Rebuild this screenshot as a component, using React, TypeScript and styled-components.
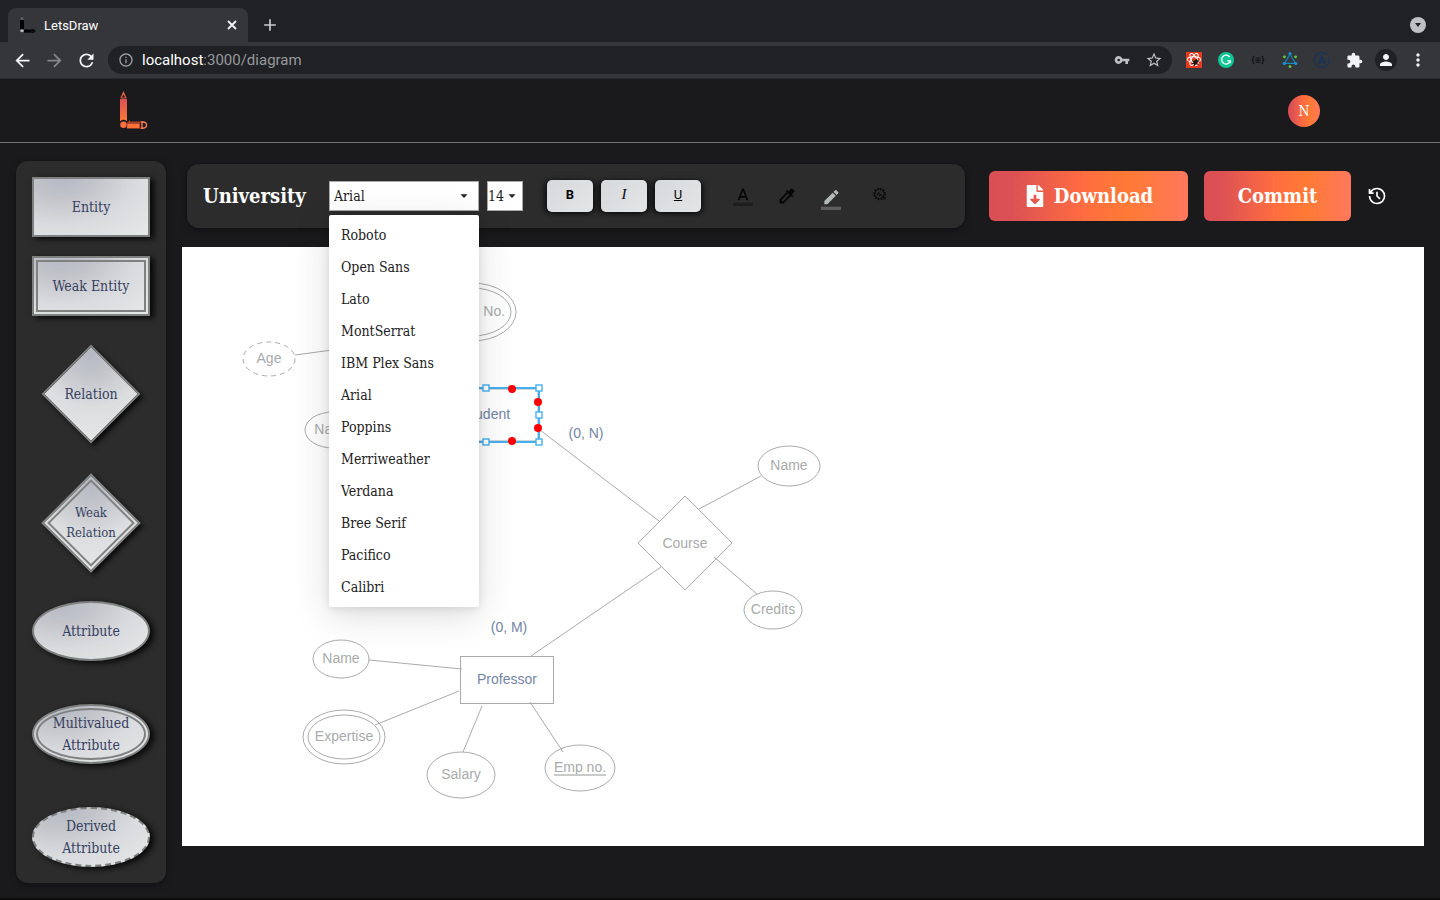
import React from "react";
import styled, { createGlobalStyle, css } from "styled-components";
import {
  MdAdd,
  MdArrowBack,
  MdArrowForward,
  MdColorize,
  MdExtension,
  MdInfoOutline,
  MdMoreVert,
  MdPerson,
  MdRefresh,
  MdStarBorder,
  MdVpnKey,
} from "react-icons/md";
import { FaFileDownload } from "react-icons/fa";

const slab = `"Roboto Slab", "DejaVu Serif Condensed", "DejaVu Serif", serif`;
const flame = "linear-gradient(90deg, #d94f55 0%, #dc5154 12%, #ff6d40 48%, #ff7a35 70%, #ff785c 100%)";

const GlobalStyle = createGlobalStyle`
  * { box-sizing: border-box; }
  body {
    margin: 0;
    background: #1a1a1c;
    font-family: ${slab};
    color: #fff;
  }
  button, select, input { font: inherit; color: inherit; }
  button { border: 0; padding: 0; background: none; cursor: pointer; }
  svg { display: block; flex: none; }
`;

const Page = styled.div`
  min-height: 100vh;
  display: flex;
  flex-direction: column;
  border-bottom: 2px solid #0c0c0d;
`;

/* Browser frame */

const TabStrip = styled.div`
  display: flex;
  align-items: flex-end;
  height: 42px;
  padding: 0 14px 0 8px;
  background: #202124;
  font-family: Roboto, sans-serif;
`;

const Tab = styled.div`
  display: flex;
  align-items: center;
  gap: 8px;
  width: 240px;
  height: 34px;
  padding: 0 11px 0 12px;
  border-radius: 8px 8px 0 0;
  background: #35363a;
  font-size: 13px;
`;

const TabTitle = styled.span`
  flex: 1;
`;

const NewTab = styled.button`
  display: flex;
  align-items: center;
  height: 34px;
  margin-left: 12px;
  color: #c8cbd0;
`;

const TabSearch = styled.button`
  display: flex;
  align-items: center;
  justify-content: center;
  width: 16px;
  height: 16px;
  margin: 0 0 9px auto;
  border-radius: 50%;
  background: #bdc1c6;
`;

const BrowserBar = styled.div`
  display: flex;
  align-items: center;
  height: 37px;
  padding: 0 14px 0 12px;
  border-bottom: 1px solid #2a2a2b;
  background: #35363a;
  font-family: Roboto, sans-serif;
`;

const NavButton = styled.button<{ $dim?: boolean }>`
  display: flex;
  justify-content: center;
  width: 20px;
  margin-right: 12px;
  color: ${(p) => (p.$dim ? "#86878a" : "#f4f5f6")};
`;

const Address = styled.div`
  display: flex;
  flex: 1;
  align-items: center;
  gap: 8px;
  height: 28px;
  padding: 0 9px 0 10px;
  border-radius: 14px;
  background: #202124;
  color: #bdc1c6;
  font-size: 15px;
`;

const Url = styled.span`
  flex: 1;
  color: #96999d;
  b {
    color: #fff;
    font-weight: 400;
  }
`;

const AddressIcon = styled.button`
  margin-left: 7px;
`;

const Extensions = styled.div`
  display: flex;
  align-items: center;
  gap: 16px;
  margin-left: 14px;
`;

const Extension = styled.button`
  display: flex;
  align-items: center;
  justify-content: center;
  width: 16px;
  height: 16px;
  color: #f1f3f4;
`;

/* Application header */

const Header = styled.header`
  display: flex;
  align-items: center;
  justify-content: space-between;
  height: 64px;
  padding: 0 120px;
  border-bottom: 1px solid #767676;
`;

const HomeLink = styled.a`
  display: block;
`;

const Avatar = styled.button`
  width: 32px;
  height: 32px;
  border-radius: 50%;
  background: ${flame};
  color: #fff;
  font-size: 14px;
  line-height: 32px;
`;

const Workspace = styled.main`
  display: flex;
  flex: 1;
  align-items: flex-start;
  gap: 16px;
  padding: 18px 16px 15px;
`;

/* Shape palette */

const Palette = styled.aside`
  display: flex;
  flex: none;
  flex-direction: column;
  gap: 29px;
  width: 150px;
  padding: 16px;
  border-radius: 12px;
  background: #2c2c2c;
  box-shadow: 0 2px 6px rgba(0, 0, 0, 0.4);
`;

const ShapeGroup = styled.div<{ $gap: number }>`
  display: flex;
  flex-direction: column;
  align-items: center;
  gap: ${(p) => p.$gap}px;
`;

type Outline = "single" | "double" | "dashed";

const outline = {
  single: "2px solid #7f8080",
  double: "6px double #7f8080",
  dashed: "2px dashed #7f8080",
};

const shapeSkin = css<{ $outline: Outline }>`
  border: ${(p) => outline[p.$outline]};
  background: radial-gradient(ellipse 80% 100% at 25% 0%, #b5b9c3 0%, #c2c4ca 35%, #dadbde 80%, #e5e6e6 125%) border-box #e5e6e6;
`;

const ShapeButton = styled.button<{ $outline: Outline; $round?: boolean }>`
  ${shapeSkin}
  display: flex;
  align-items: center;
  justify-content: center;
  width: 118px;
  height: 60px;
  border-radius: ${(p) => (p.$round ? "50%" : "0")};
  box-shadow: 4px 2px 6px rgba(0, 0, 0, 0.85);
  color: #36405f;
  font-size: 14px;
  line-height: 22px;
`;

const DiamondButton = styled.button`
  display: grid;
  place-items: center;
  width: 98px;
  height: 98px;
  color: #36405f;
  line-height: 20px;
`;

const DiamondShape = styled.span<{ $outline: Outline }>`
  ${shapeSkin}
  grid-area: 1 / 1;
  width: 70px;
  height: 70px;
  background: radial-gradient(circle at 10% 10%, #b5b9c3 0%, #c3c5cb 25%, #dcdddf 60%, #e6e7e7 100%) border-box;
  box-shadow: 4px 0 5px rgba(0, 0, 0, 0.8);
  transform: rotate(45deg);
`;

const DiamondLabel = styled.span<{ $small?: boolean }>`
  grid-area: 1 / 1;
  z-index: 1;
  font-size: ${(p) => (p.$small ? 13 : 14)}px;
`;

/* Editor */

const Editor = styled.section`
  display: flex;
  flex: 1;
  flex-direction: column;
  gap: 19px;
  min-width: 0;
`;

const TopRow = styled.div`
  display: flex;
  align-items: center;
  padding: 3px 37px 0 5px;
`;

const Toolbar = styled.div`
  display: flex;
  flex: 1;
  align-items: center;
  height: 64px;
  padding: 0 16px;
  border-radius: 12px;
  background: #2c2c2c;
  box-shadow: 0 2px 6px rgba(0, 0, 0, 0.4);
`;

const Title = styled.h1`
  width: 126px;
  margin: 0;
  font-size: 20px;
  font-weight: 700;
`;

const Field = styled.div<{ $width: number; $caret: number }>`
  position: relative;
  display: grid;
  align-items: center;
  width: ${(p) => p.$width}px;
  margin-right: 8px;
  color: #222;
  svg {
    grid-area: 1 / 1;
    justify-self: end;
    margin-right: ${(p) => p.$caret}px;
    pointer-events: none;
  }
`;

const Select = styled.select<{ $inset: number }>`
  appearance: none;
  grid-area: 1 / 1;
  width: 100%;
  height: 30px;
  padding: 0 0 0 ${(p) => p.$inset}px;
  border: 1px solid #a9a9a9;
  border-radius: 0;
  background: #fff;
  color: #222;
  font-size: 14px;
`;

const Menu = styled.ul`
  position: absolute;
  z-index: 5;
  top: 34px;
  left: 0;
  width: 150px;
  margin: 0;
  padding: 4px 0;
  border-radius: 2px;
  background: #fff;
  box-shadow: 0 2px 8px rgba(0, 0, 0, 0.1), 0 8px 38px rgba(0, 0, 0, 0.14);
  list-style: none;
`;

const MenuItem = styled.li`
  height: 32px;
  padding: 0 12px;
  color: #222;
  font-size: 14px;
  line-height: 32px;
  white-space: nowrap;
`;

const StyleButtons = styled.div`
  display: flex;
  gap: 8px;
  margin: 0 32px 0 16px;
`;

const StyleButton = styled.button<{ $kind: "bold" | "italic" | "underline" }>`
  width: 46px;
  height: 32px;
  padding-bottom: 4px;
  border-radius: 5px;
  background: linear-gradient(135deg, #d7d8dc, #e4e5e6);
  box-shadow: -3px 1px 5px rgba(0, 0, 0, 0.6), 3px 1px 5px rgba(0, 0, 0, 0.5);
  color: #050505;
  font-family: ${(p) => (p.$kind === "italic" ? '"Liberation Serif", serif' : "Roboto, sans-serif")};
  font-size: ${(p) => (p.$kind === "italic" ? 15 : 13)}px;
  font-style: ${(p) => (p.$kind === "italic" ? "italic" : "normal")};
  font-weight: ${(p) => (p.$kind === "bold" ? 700 : 400)};
  text-decoration: ${(p) => (p.$kind === "underline" ? "underline" : "none")};
`;

const Tools = styled.div`
  display: flex;
  align-items: center;
  gap: 24px;
`;

const Tool = styled.button<{ $tone?: string; $drop?: number }>`
  padding-top: ${(p) => p.$drop ?? 0}px;
  color: ${(p) => p.$tone ?? "#050505"};
`;

const Actions = styled.div`
  display: flex;
  align-items: center;
  gap: 16px;
  margin-left: 24px;
`;

const Action = styled.button<{ $width: number }>`
  display: flex;
  align-items: center;
  justify-content: center;
  gap: 8px;
  width: ${(p) => p.$width}px;
  height: 50px;
  border-radius: 6px;
  background: ${flame};
  color: #fff;
  font-size: 20px;
  font-weight: 700;
`;

const Canvas = styled.div`
  height: 599px;
  background: #fff;
  svg {
    width: 100%;
    height: 100%;
  }
`;

const Edge = styled.line`
  stroke: #a9abab;
`;

const Node = styled.g`
  fill: none;
  stroke: #a9abab;
  text {
    fill: #a9abab;
    stroke: none;
    font-family: "Liberation Sans", Arial, sans-serif;
    font-size: 14px;
    text-anchor: middle;
  }
`;

const Accent = styled(Node)`
  text {
    fill: #7385a5;
  }
`;

const fonts = [
  "Roboto",
  "Open Sans",
  "Lato",
  "MontSerrat",
  "IBM Plex Sans",
  "Arial",
  "Poppins",
  "Merriweather",
  "Verdana",
  "Bree Serif",
  "Pacifico",
  "Calibri",
];

const Caret = () => (
  <svg width="16" height="16" viewBox="0 0 16 16" aria-hidden="true">
    <path d="M4.5 6.2h7L8 9.9z" fill="#222" />
  </svg>
);

function Logo({ favicon }: { favicon?: boolean }) {
  const id = favicon ? "ink-dark" : "ink-flame";
  return (
    <svg width={favicon ? 16 : 28} height={favicon ? 16 : 39} viewBox="0 0 28 39" aria-hidden="true" preserveAspectRatio={favicon ? "none" : "xMidYMid"}>
      <defs>
        <linearGradient id={id} x1="0" y1="0" x2="0" y2="1">
          <stop offset="0" stopColor={favicon ? "#000" : "#d94f55"} />
          <stop offset="1" stopColor={favicon ? "#000" : "#ff7a35"} />
        </linearGradient>
      </defs>
      <path d="M3.5 0 6.6 7H.4z" fill={favicon ? "#888" : "#ef6244"} />
      <path d="M3.5 3.4 5.2 6.6H1.8z" fill="#1a1a1c" />
      <path d="M0 8.2 1.2 7.4H5.8L7 8.2V30H0z" fill={`url(#${id})`} />
      <circle cx="3.5" cy="33.4" r="4.6" fill={favicon ? "#35363a" : "#1a1a1c"} />
      <circle cx="3.5" cy="33.7" r="3.2" fill={favicon ? "#bbb" : "#ff7040"} />
      <path d="M7 31.6 10 29v1.4h13.2a4 4 0 0 1 0 7.4H7z" fill={favicon ? "#000" : "#a8432f"} />
      <path d="M7.6 33h11.8v4H7z" fill={favicon ? "#000" : "#ff7338"} />
      <path d="M20.4 30.4v7.4" stroke="#2a1714" />
      <path d="M20.6 31h2.2c5 0 5 6.2 0 6.2h-2.2M22 31v6.2" fill="#1a1a1c" stroke={favicon ? "#000" : "#ff7a50"} strokeWidth="1.4" />
    </svg>
  );
}

function Browser() {
  return (
    <>
      <TabStrip>
        <Tab>
          <Logo favicon />
          <TabTitle>LetsDraw</TabTitle>
          <button aria-label="Close tab">
            <svg width="10" height="10" viewBox="0 0 10 10">
              <path d="m1 1 8 8M9 1 1 9" stroke="#f4f5f6" strokeWidth="1.8" />
            </svg>
          </button>
        </Tab>
        <NewTab aria-label="New tab">
          <MdAdd size={20} />
        </NewTab>
        <TabSearch aria-label="Search tabs">
          <svg width="8" height="6" viewBox="0 0 8 6">
            <path d="M1 1h6L4 5z" fill="#202124" />
          </svg>
        </TabSearch>
      </TabStrip>
      <BrowserBar>
        <NavButton aria-label="Back">
          <MdArrowBack size={21} />
        </NavButton>
        <NavButton aria-label="Forward" $dim>
          <MdArrowForward size={21} />
        </NavButton>
        <NavButton aria-label="Reload">
          <MdRefresh size={21} />
        </NavButton>
        <Address>
          <MdInfoOutline size={16} color="#9aa0a6" />
          <Url>
            <b>localhost</b>:3000/diagram
          </Url>
          <AddressIcon aria-label="Passwords">
            <MdVpnKey size={16} />
          </AddressIcon>
          <AddressIcon aria-label="Bookmark">
            <MdStarBorder size={18} />
          </AddressIcon>
        </Address>
        <Extensions>
          <Extension aria-label="React tools">
            <svg width="16" height="16" viewBox="0 0 16 16">
              <path d="M0 0h16v16H0z" fill="#e8381f" />
              <g fill="none" stroke="#fff" strokeWidth="1.1">
                <ellipse cx="8" cy="7.4" rx="6.6" ry="2.6" />
                <ellipse cx="8" cy="7.4" rx="6.6" ry="2.6" transform="rotate(60 8 7.4)" />
                <ellipse cx="8" cy="7.4" rx="6.6" ry="2.6" transform="rotate(120 8 7.4)" />
              </g>
              <ellipse cx="9.6" cy="10.2" rx="1.9" ry="3" fill="#1c1512" transform="rotate(35 9.6 10.2)" />
              <path d="m6 8.6 2.2 1.2M5.8 11.8l2.2-.6M13.2 9l-2.2.6M12.8 13l-2-1.4M8 13.8l1-2M10.8 6.6 10 8" stroke="#1c1512" />
            </svg>
          </Extension>
          <Extension aria-label="Grammarly">
            <svg width="16" height="16" viewBox="0 0 16 16">
              <circle cx="8" cy="8" r="8" fill="#10c796" />
              <path d="M11.6 5A4.4 4.4 0 1 0 12.3 8.8H9.2M12.3 8.6v2.6" fill="none" stroke="#fff" strokeWidth="1.3" />
            </svg>
          </Extension>
          <Extension aria-label="JSON viewer">
            <svg width="16" height="16" viewBox="0 0 16 16">
              <path
                d="M4.4 4.2C3 4.2 3.2 5 3.2 6.3 3.2 7.6 2.8 8 1.6 8c1.2 0 1.6.4 1.6 1.7 0 1.3-.2 2.1 1.2 2.1M11.6 4.2c1.4 0 1.2.8 1.2 2.1 0 1.3.4 1.7 1.6 1.7-1.2 0-1.6.4-1.6 1.7 0 1.3.2 2.1-1.2 2.1M5.6 6h4.8M5.6 8.1h4.8M5.6 10.2h4.8"
                fill="none"
                stroke="#101012"
                strokeWidth="1.1"
              />
            </svg>
          </Extension>
          <Extension aria-label="GraphQL network">
            <svg width="16" height="16" viewBox="0 0 16 16">
              <path d="M8 2 2.4 11.4h11.2z" fill="none" stroke="#1588c4" strokeWidth="1.1" />
              <path d="M8 2 5.6 8M8 2l2.8 6" stroke="#16679a" strokeWidth=".7" />
              <g fill="#1696d6">
                <circle cx="8" cy="1.6" r="1.5" />
                <circle cx="2.2" cy="11.5" r="1.5" />
                <circle cx="13.8" cy="11.5" r="1.5" />
              </g>
              <g fill="#5fd43c">
                <circle cx="2.4" cy="4.8" r="1.4" />
                <circle cx="13.6" cy="4.8" r="1.4" />
                <circle cx="8" cy="14.6" r="1.4" />
              </g>
            </svg>
          </Extension>
          <Extension aria-label="Apollo">
            <svg width="16" height="16" viewBox="0 0 16 16" fill="none" stroke="#173458">
              <path d="M13.4 2.9A7.4 7.4 0 1 0 15 5.6" strokeWidth="1.2" />
              <path d="M4.8 11.6 8 4.4l3.2 7.2M6.2 9.6h3.6" strokeWidth="1.8" />
            </svg>
          </Extension>
          <Extension aria-label="Extensions">
            <MdExtension size={17} />
          </Extension>
          <Extension aria-label="Profile">
            <svg width="22" height="22" viewBox="0 0 22 22">
              <circle cx="11" cy="11" r="11" fill="#202124" />
              <MdPerson x="2" y="2" size={18} />
            </svg>
          </Extension>
          <Extension aria-label="Menu">
            <MdMoreVert size={20} />
          </Extension>
        </Extensions>
      </BrowserBar>
    </>
  );
}

function ShapePalette() {
  return (
    <Palette aria-label="Shapes">
      <ShapeGroup $gap={19}>
        <ShapeButton $outline="single">Entity</ShapeButton>
        <ShapeButton $outline="double">Weak Entity</ShapeButton>
      </ShapeGroup>
      <ShapeGroup $gap={31}>
        <DiamondButton>
          <DiamondShape $outline="single" />
          <DiamondLabel>Relation</DiamondLabel>
        </DiamondButton>
        <DiamondButton>
          <DiamondShape $outline="double" />
          <DiamondLabel $small>
            Weak
            <br />
            Relation
          </DiamondLabel>
        </DiamondButton>
      </ShapeGroup>
      <ShapeGroup $gap={43}>
        <ShapeButton $outline="single" $round>
          Attribute
        </ShapeButton>
        <ShapeButton $outline="double" $round>
          Multivalued
          <br />
          Attribute
        </ShapeButton>
        <ShapeButton $outline="dashed" $round>
          Derived
          <br />
          Attribute
        </ShapeButton>
      </ShapeGroup>
    </Palette>
  );
}

interface EllipseProps {
  x: number;
  y: number;
  rx: number;
  ry: number;
  label: string;
  double?: boolean;
  dashed?: boolean;
}

function Attribute({ x, y, rx, ry, label, double, dashed }: EllipseProps) {
  return (
    <Node>
      <ellipse cx={x} cy={y} rx={rx} ry={ry} strokeDasharray={dashed ? "5 4" : undefined} />
      {double && <ellipse cx={x} cy={y} rx={rx - 5} ry={ry - 5} />}
      <text x={x} y={y + 4}>
        {label}
      </text>
    </Node>
  );
}

const edges = [
  [113, 108, 180, 99],
  [358, 183, 477, 274],
  [517, 262, 579, 229],
  [532, 310, 575, 347],
  [479, 320, 349, 409],
  [187, 413, 280, 422],
  [277, 444, 193, 478],
  [300, 459, 281, 505],
  [348, 455, 381, 505],
];

const handles = [
  [251, 141],
  [304, 141],
  [357, 141],
  [251, 168],
  [357, 168],
  [251, 195],
  [304, 195],
  [357, 195],
];

const ports = [
  [330, 142],
  [356, 155],
  [356, 181],
  [330, 194],
];

function Diagram() {
  return (
    <Canvas>
      <svg role="img" aria-label="University diagram">
        {edges.map(([x1, y1, x2, y2]) => (
          <Edge key={`${x1}-${y1}`} x1={x1} y1={y1} x2={x2} y2={y2} />
        ))}
        <Attribute x={87} y={112} rx={26} ry={17} label="Age" dashed />
        <Attribute x={290} y={65} rx={44} ry={29} label="Phone No." double />
        <Attribute x={151} y={183} rx={28} ry={18} label="Name" />
        <Attribute x={607} y={219} rx={31} ry={20} label="Name" />
        <Attribute x={591} y={363} rx={29} ry={19} label="Credits" />
        <Attribute x={159} y={412} rx={28} ry={19} label="Name" />
        <Attribute x={162} y={490} rx={41} ry={27} label="Expertise" double />
        <Attribute x={279} y={528} rx={34} ry={23} label="Salary" />
        <Attribute x={398} y={521} rx={35} ry={23} label="Emp no." />
        <path d="M372 528h52" stroke="#c9cbcb" strokeWidth="2" />
        <Node>
          <path d="M503 249 550 296 503 343 456 296z" />
          <text x="503" y="301">
            Course
          </text>
        </Node>
        <Accent>
          <rect x="278.5" y="409.5" width="93" height="47" />
          <text x="325" y="437">
            Professor
          </text>
          <text x="327" y="385">
            (0, M)
          </text>
          <text x="404" y="191">
            (0, N)
          </text>
          <text x="304" y="172">
            Student
          </text>
        </Accent>
        <rect x="252" y="142" width="104" height="52" fill="none" stroke="#a9abab" />
        <rect x="251" y="141" width="106" height="54" fill="none" stroke="#43b0f1" strokeWidth="2" />
        {handles.map(([x, y]) => (
          <rect key={`${x}-${y}`} x={x - 3} y={y - 3} width="6" height="6" fill="#fff" stroke="#43b0f1" strokeWidth="1.4" />
        ))}
        {ports.map(([x, y]) => (
          <circle key={`${x}-${y}`} cx={x} cy={y} r="4" fill="#f00" />
        ))}
      </svg>
    </Canvas>
  );
}

function EditorToolbar() {
  return (
    <Toolbar>
      <Title>University</Title>
      <Field $width={150} $caret={7}>
        <Select $inset={4} defaultValue="Arial" aria-label="Font family">
          {fonts.map((font) => (
            <option key={font}>{font}</option>
          ))}
        </Select>
        <Caret />
        <Menu>
          {fonts.map((font) => (
            <MenuItem key={font}>{font}</MenuItem>
          ))}
        </Menu>
      </Field>
      <Field $width={36} $caret={3}>
        <Select $inset={0} defaultValue="14" aria-label="Font size">
          <option>12</option>
          <option>14</option>
          <option>16</option>
        </Select>
        <Caret />
      </Field>
      <StyleButtons>
        <StyleButton $kind="bold">B</StyleButton>
        <StyleButton $kind="italic">I</StyleButton>
        <StyleButton $kind="underline">U</StyleButton>
      </StyleButtons>
      <Tools>
        <Tool aria-label="Text color">
          <svg width="20" height="20" viewBox="0 0 24 24" fill="currentColor">
            <path d="M0 20h24v4H0z" fillOpacity=".36" />
            <path d="M11 3 5.5 17h2.25l1.12-3h6.25l1.12 3h2.25L13 3h-2zm-1.38 9L12 5.67 14.38 12H9.62z" />
          </svg>
        </Tool>
        <Tool aria-label="Pick color">
          <MdColorize size={20} />
        </Tool>
        <Tool aria-label="Line color" $tone="#b3b9b6" $drop={8}>
          <svg width="20" height="20" viewBox="0 0 24 24" fill="currentColor">
            <path d="M17.75 7 14 3.25l-10 10V17h3.75l10-10zm2.96-2.96a1 1 0 0 0 0-1.41L18.37.29a1 1 0 0 0-1.41 0L15 2.25 18.75 6l1.96-1.96z" />
            <path d="M0 20h24v4H0z" fillOpacity=".36" />
          </svg>
        </Tool>
        <Tool aria-label="Shape settings">
          <svg width="30" height="24" viewBox="0 0 30 24" fill="none" stroke="#080808">
            <circle cx="14.5" cy="10" r="5.6" strokeWidth="1.5" strokeDasharray="1.5 1.43" />
            <circle cx="14.5" cy="10" r="4.6" strokeWidth=".9" />
            <path d="m12 11.4 1.6-2.8 1.8 2M15.4 10l4.8 5.4M13.6 11.8l2.2-.8M18.2 15.6l3-2.4" strokeWidth="1" />
          </svg>
        </Tool>
      </Tools>
    </Toolbar>
  );
}

export default function App() {
  return (
    <Page>
      <GlobalStyle />
      <Browser />
      <Header>
        <HomeLink href="#" aria-label="LetsDraw home">
          <Logo />
        </HomeLink>
        <Avatar aria-label="Account">N</Avatar>
      </Header>
      <Workspace>
        <ShapePalette />
        <Editor>
          <TopRow>
            <EditorToolbar />
            <Actions>
              <Action $width={199}>
                <FaFileDownload size={22} />
                Download
              </Action>
              <Action $width={147}>Commit</Action>
              <button aria-label="History">
                <svg width="20" height="20" viewBox="0 0 24 24" fill="#fff">
                  <path d="M12 2a10 10 0 1 1-10 10h2a8 8 0 1 0 1.38-4.5H8v2H2v-6h2V6a10 10 0 0 1 8-4zm1 5v4.59l3.24 3.24-1.41 1.41L11 12.41V7z" />
                </svg>
              </button>
            </Actions>
          </TopRow>
          <Diagram />
        </Editor>
      </Workspace>
    </Page>
  );
}
